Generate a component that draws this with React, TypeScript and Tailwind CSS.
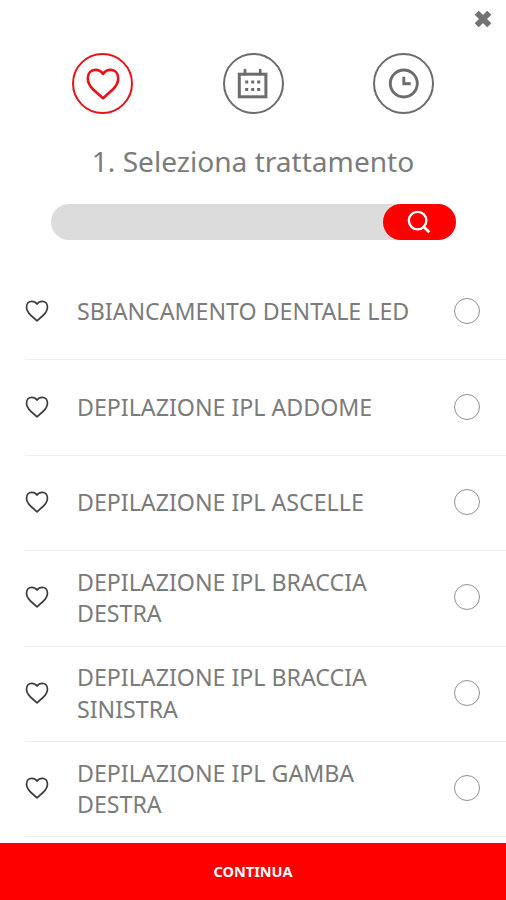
const treatments = [
  'SBIANCAMENTO DENTALE LED',
  'DEPILAZIONE IPL ADDOME',
  'DEPILAZIONE IPL ASCELLE',
  'DEPILAZIONE IPL BRACCIA DESTRA',
  'DEPILAZIONE IPL BRACCIA SINISTRA',
  'DEPILAZIONE IPL GAMBA DESTRA',
];

function HeartIcon({ className }: { className?: string }) {
  return (
    <svg viewBox="0 0 34 32" fill="none" stroke="currentColor" strokeLinejoin="round" className={className}>
      <path d="M17 30.300 L7.500 21.800 C3.500 18 1.800 14.500 1.800 10.300 C1.800 5.200 5 1.900 9.300 1.900 C12.500 1.900 15.200 3.300 17 5.900 C18.800 3.300 21.500 1.900 24.700 1.900 C29 1.900 32.200 5.200 32.200 10.300 C32.200 14.500 30.500 18 26.500 21.800 Z" />
    </svg>
  );
}

function CalendarIcon() {
  return (
    <svg viewBox="0 0 32 32" fill="none" stroke="currentColor" className="size-8">
      <rect x="2.300" y="6.200" width="26.600" height="22.600" strokeWidth="3" />
      <path d="M8 2.200v4M23.200 2.200v4" strokeWidth="2.800" strokeLinecap="round" />
      <path d="M8.200 14h15M8.200 21.400h15" strokeWidth="3" strokeDasharray="3" />
    </svg>
  );
}

function ClockIcon() {
  return (
    <svg viewBox="0 0 32 32" fill="none" stroke="currentColor" strokeWidth="2.900" className="size-8">
      <circle cx="15.800" cy="15.500" r="13.500" />
      <path d="M15.800 8.800v7h7" />
    </svg>
  );
}

export default function App() {
  return (
    <div className="flex h-[900px] w-[506px] flex-col overflow-hidden bg-white font-['Noto_Sans',sans-serif] text-[#7b7b7b]">
      <header className="flex h-[53px] justify-end pt-[10px] pr-[14px]">
        <svg viewBox="0 0 18 18" className="size-[18px] text-[#737373]" stroke="currentColor" strokeWidth="5.800">
          <path d="M2.700 2.700l12.600 12.600M15.300 2.700L2.700 15.300" />
        </svg>
      </header>
      <nav className="flex justify-between px-[72px]">
        <div className="flex size-[61px] items-center justify-center rounded-full border-2 border-[#ea1217] text-[#ea1217]">
          <HeartIcon className="h-8 w-[34px] stroke-[2.6]" />
        </div>
        <div className="flex size-[61px] items-center justify-center rounded-full border-2 border-[#6c6c6c] text-[#6c6c6c]">
          <CalendarIcon />
        </div>
        <div className="flex size-[61px] items-center justify-center rounded-full border-2 border-[#6c6c6c] text-[#6c6c6c]">
          <ClockIcon />
        </div>
      </nav>
      <h1 className="mt-[27px] text-center text-[28.100px] leading-[40px]">1. Seleziona trattamento</h1>
      <div className="mx-auto mt-[23px] flex h-9 w-[405px] justify-end rounded-full bg-[#dcdcdc]">
        <button className="flex w-[73px] items-center justify-center rounded-full bg-[#fe0000] text-white">
          <svg viewBox="0 0 24 24" fill="none" stroke="currentColor" strokeWidth="2.300" className="size-6">
            <circle cx="10.600" cy="10.600" r="8.800" />
            <path d="M16 16l6.300 6.300" strokeWidth="2.800" />
          </svg>
        </button>
      </div>
      <ul className="mt-[25px] flex-1 overflow-hidden pl-[25px]">
        {treatments.map((name) => (
          <li key={name} className="flex h-[95.400px] items-center border-b border-[#efefef] pb-[2px]">
            <HeartIcon className="h-[22px] w-6 stroke-[2.5] text-[#3c3c3c]" />
            <span className="ml-7 w-[340px] pt-[2px] text-[23.200px] leading-[31.500px]">{name}</span>
            <span className="mr-[26px] ml-auto size-[26px] rounded-full border border-[#8f8f8f]" />
          </li>
        ))}
      </ul>
      <button className="h-[57px] bg-[#fe0000] text-[14.500px] font-bold text-white">CONTINUA</button>
    </div>
  );
}
